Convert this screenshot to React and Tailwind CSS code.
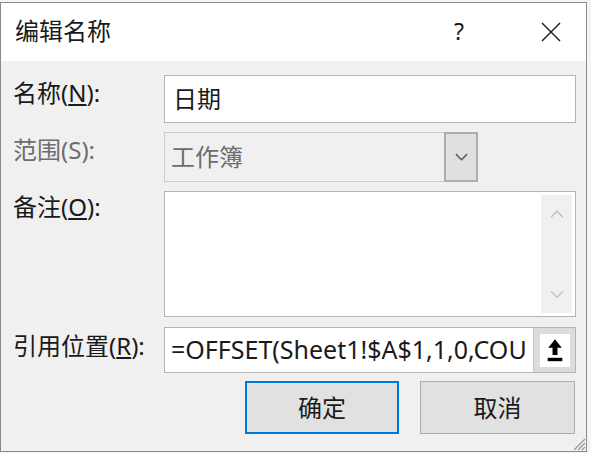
import React from 'react';

const font = { fontFamily: '"Noto Sans", "Noto Sans CJK SC", sans-serif' };

const Label = ({ children, disabled, className = '' }) => (
    <div className={`text-[24px] leading-none whitespace-nowrap ${disabled ? 'text-[#6d6d6d]' : 'text-[#1a1a1a]'} ${className}`}>
        {children}
    </div>
);

const Chevron = ({ up, color = '#5a5a5a', size = 14 }) => (
    <svg width={size} height={size * 0.6} viewBox="0 0 14 8" fill="none">
        <path d={up ? 'M1 7 L7 1 L13 7' : 'M1 1 L7 7 L13 1'} stroke={color} strokeWidth="1.6" />
    </svg>
);

export default function App() {
    return (
        <div className="w-[591px] h-[453px] bg-[#f4f4f4] overflow-hidden" style={font}>
            <div className="mt-[2px] w-[587px] h-[450px] border border-[#8a8a8a] flex flex-col relative">
                {/* title bar */}
                <div className="h-[58px] bg-white flex items-center shrink-0">
                    <div className="pl-[14px] text-[24px] text-[#1a1a1a] flex-1 pb-[2px]">编辑名称</div>
                    <div className="w-[40px] text-center text-[23px] text-[#1a1a1a] mr-[52px] pb-[2px]">?</div>
                    <div className="w-[40px] flex justify-center mr-[15px]">
                        <svg width="20" height="20" viewBox="0 0 20 20">
                            <path d="M1 1 L19 19 M19 1 L1 19" stroke="#1a1a1a" strokeWidth="1.4" />
                        </svg>
                    </div>
                </div>

                {/* body */}
                <div className="flex-1 bg-[#f0f0f0] pt-[14px] pl-[12px] pr-[10px]">
                    <div className="grid grid-cols-[151px_1fr] gap-y-[9px]">
                        <Label className="pt-[6px]">名称(<span className="underline underline-offset-2">N</span>):</Label>
                        <div className="h-[48px] border border-[#b4b4b4] bg-white flex items-center pl-[8px] text-[24px] text-[#1a1a1a]">日期</div>

                        <Label disabled className="pt-[6px]">范围(S):</Label>
                        <div className="w-[314px] h-[50px] border border-[#cccccc] bg-[#f0f0f0] flex">
                            <div className="flex-1 flex items-center pl-[6px] text-[24px] text-[#6d6d6d]">工作簿</div>
                            <div className="w-[34px] -my-px -mr-px border-2 border-[#adadad] bg-[#e0e0e0] flex items-center justify-center">
                                <Chevron color="#5a5a5a" size={13} />
                            </div>
                        </div>

                        <Label className="pt-[4px]">备注(<span className="underline underline-offset-2">O</span>):</Label>
                        <div className="h-[126px] border border-[#b4b4b4] bg-white flex justify-end p-[3px]">
                            <div className="w-[31px] bg-[#f0f0f0] flex flex-col items-center justify-between py-[15px]">
                                <Chevron up color="#c4c4c4" size={14} />
                                <Chevron color="#c4c4c4" size={14} />
                            </div>
                        </div>

                        <Label className="pt-[8px]">引用位置(<span className="underline underline-offset-2">R</span>):</Label>
                        <div className="h-[46px] border border-[#b4b4b4] bg-white flex mt-px">
                            <div className="flex-1 flex items-center pl-[6px] text-[25px] text-[#1a1a1a] overflow-hidden whitespace-nowrap">=OFFSET(Sheet1!$A$1,1,0,COU</div>
                            <div className="w-[42px] bg-[#dcdcdc] border-l border-[#c8c8c8] flex items-center justify-center">
                                <div className="w-[30px] h-[33px] bg-white flex items-center justify-center">
                                    <svg width="18" height="25" viewBox="0 0 16 22">
                                        <path d="M8 1 L14 8.5 L10.2 8.5 L10.2 15 L5.8 15 L5.8 8.5 L2 8.5 Z" fill="#000" />
                                        <rect x="1.5" y="17.5" width="13" height="3" fill="#000" />
                                    </svg>
                                </div>
                            </div>
                        </div>
                    </div>

                    <div className="flex justify-end gap-[21px] mt-[8px] mr-[1px]">
                        <button className="w-[154px] h-[53px] border-2 border-[#0078d7] bg-[#e1e1e1] text-[24px] text-[#1a1a1a]">确定</button>
                        <button className="w-[155px] h-[53px] border border-[#adadad] bg-[#e1e1e1] text-[24px] text-[#1a1a1a]">取消</button>
                    </div>
                </div>

                {/* resize grip */}
                <svg className="absolute right-0 bottom-0" width="16" height="16" viewBox="0 0 16 16">
                    <path d="M15 4 L4 15 M15 8 L8 15 M15 12 L12 15" stroke="#9a9a9a" strokeWidth="1.2" />
                </svg>
            </div>
        </div>
    );
}
